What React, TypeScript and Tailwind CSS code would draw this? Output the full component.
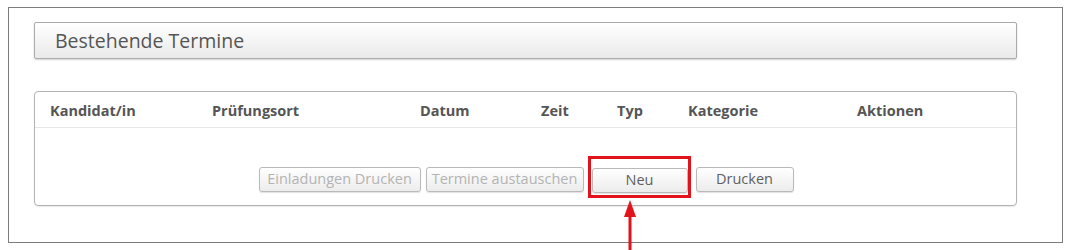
import React from 'react';

const columns = [
    { label: 'Kandidat/in', width: 'w-[162px]' },
    { label: 'Prüfungsort', width: 'w-[208px]' },
    { label: 'Datum', width: 'w-[121px]' },
    { label: 'Zeit', width: 'w-[76px]' },
    { label: 'Typ', width: 'w-[71px]' },
    { label: 'Kategorie', width: 'w-[169px]' },
    { label: 'Aktionen', width: 'flex-1' },
];

const btnBase = 'h-[25px] rounded-[3px] border border-[#b9b9b9] bg-gradient-to-b from-[#ffffff] to-[#ececec] text-[14.5px] leading-none shadow-[0_1px_1px_rgba(0,0,0,0.12)]';

const App: React.FC = () => {
    return (
        <div className="w-[1074px] h-[250px] bg-white pt-[7px] pl-[8px] font-['Open_Sans',sans-serif] relative overflow-hidden">
            <div className="w-[1055px] h-[236px] border border-[#7d7d7d] pt-[14px] pl-[25px]">
                {/* section title */}
                <div className="w-[983px] h-[37px] border border-[#ababab] rounded-[2px] bg-gradient-to-b from-[#ffffff] to-[#eaeaea] shadow-[0_1px_2px_rgba(0,0,0,0.18)] flex items-center pl-[20px]">
                    <h2 className="text-[19.5px] text-[#555555] pt-[1px]">Bestehende Termine</h2>
                </div>

                {/* table */}
                <div className="mt-[32px] w-[983px] h-[115px] border border-[#b2b2b2] rounded-[4px] shadow-[0_1px_1px_rgba(0,0,0,0.08)]">
                    <div className="h-[36px] flex items-center pl-[15px] border-b border-[#e6e6e6]">
                        {columns.map(col => (
                            <div key={col.label} className={`${col.width} text-[14.5px] font-bold text-[#555555] pt-[3px]`}>
                                {col.label}
                            </div>
                        ))}
                    </div>
                    <div className="flex justify-center pt-[39px] pl-[1px]">
                        <button disabled className={`${btnBase} w-[162px] text-[#b3b3b3]`}>Einladungen Drucken</button>
                        <button disabled className={`${btnBase} ml-[5px] w-[158px] text-[#b3b3b3]`}>Termine austauschen</button>
                        <div className="relative ml-[8px]">
                            <button className={`${btnBase} w-[96px] text-[#5f5f5f]`}>Neu</button>
                            <div className="absolute -left-[4px] -top-[11px] w-[103px] h-[42px] border-[3px] border-[#e2131b]" />
                        </div>
                        <button className={`${btnBase} ml-[8px] w-[98px] text-[#5f5f5f]`}>Drucken</button>
                    </div>
                </div>
            </div>

            {/* annotation arrow */}
            <svg className="absolute left-[622px] top-[199px]" width="16" height="51" viewBox="0 0 16 51">
                <polygon points="8,1 2,18 14,18" fill="#e2131b" />
                <rect x="6.5" y="16" width="3" height="35" fill="#e2131b" />
            </svg>
        </div>
    );
};

export default App;
